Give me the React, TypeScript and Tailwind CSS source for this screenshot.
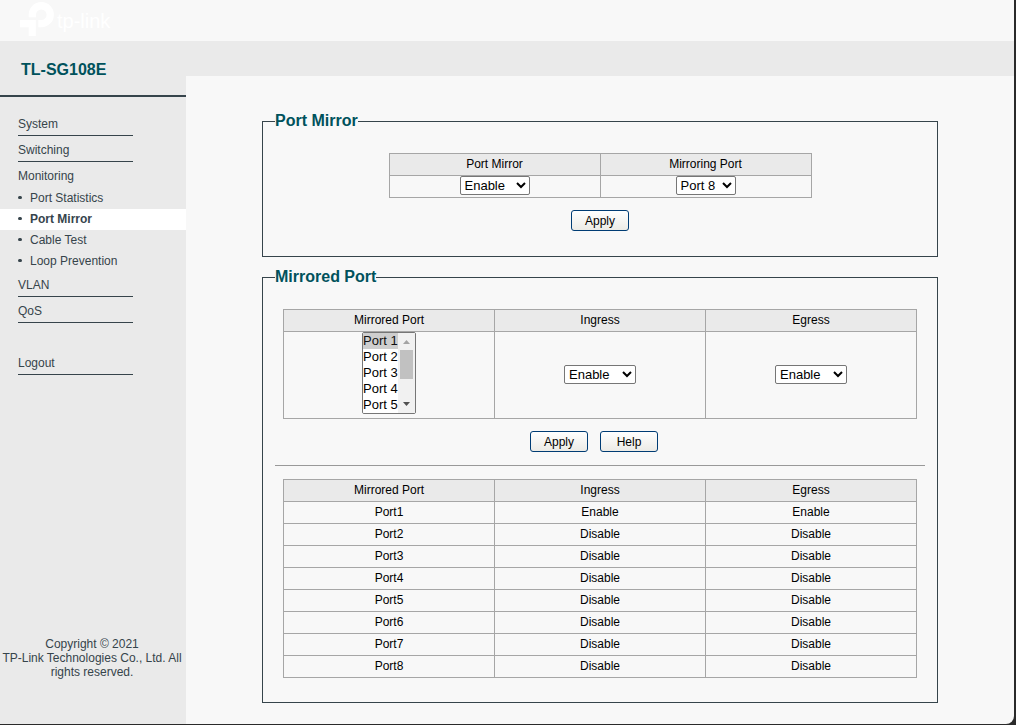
import type { ReactNode } from 'react';

const PORTS = [1, 2, 3, 4, 5, 6, 7, 8];

const SUB_ITEMS = ['Port Statistics', 'Port Mirror', 'Cable Test', 'Loop Prevention'];

function Logo() {
  return (
    <div className="flex h-full items-center gap-[3px] pb-[3px] pl-5 text-white">
      <svg viewBox="0 0 34 34" className="h-[34px] w-[34px]" fill="currentColor" aria-hidden="true">
        <path d="M8.7 15.3V12.7A12.6 12.6 0 1 1 21.3 25.3H18.3V18H21.3A5.3 5.3 0 1 0 16 12.7V15.3Z" />
        <path d="M0 18H15.8V34H8.7V25.2H0Z" />
      </svg>
      <span className="pt-1 text-[20px] leading-6">tp-link</span>
    </div>
  );
}

function MenuLink({ children }: { children: ReactNode }) {
  return (
    <a href="#" className="block h-[26px] border-b border-[#36444b] pt-1 leading-5">
      {children}
    </a>
  );
}

function Sidebar() {
  return (
    <aside className="flex w-[186px] shrink-0 flex-col bg-[#eaeaea] text-[#36444b]">
      <h1 className="border-b-2 border-[#36444b] pt-[19px] pb-[15px] pl-[21px] text-base leading-5 font-bold text-[#00525c]">
        TL-SG108E
      </h1>
      <nav className="pt-[13px]">
        <div className="mr-[53px] ml-[18px]">
          <MenuLink>System</MenuLink>
          <MenuLink>Switching</MenuLink>
          <a href="#" className="block h-[26px] pt-1 leading-5">
            Monitoring
          </a>
        </div>
        <ul className="-mb-px">
          {SUB_ITEMS.map((item) => (
            <li key={item} className={item === 'Port Mirror' ? 'bg-white font-bold' : ''}>
              <a href="#" className="flex h-[21px] items-center gap-2 pb-0.5 pl-[18px]">
                <span className="h-[3px] w-1 rounded-full bg-[#36444b]" />
                {item}
              </a>
            </li>
          ))}
        </ul>
        <div className="mr-[53px] ml-[18px]">
          <MenuLink>VLAN</MenuLink>
          <MenuLink>QoS</MenuLink>
          <div className="pt-[26px]">
            <MenuLink>Logout</MenuLink>
          </div>
        </div>
      </nav>
      <footer className="mt-auto pr-0.5 pb-[45px] text-center leading-[14px]">
        Copyright © 2021
        <br />
        TP-Link Technologies Co., Ltd. All rights reserved.
      </footer>
    </aside>
  );
}

function Section({ title, children }: { title: string; children: ReactNode }) {
  return (
    <fieldset className="min-w-0 border border-[#36444b] px-3 pb-6">
      <legend className="pb-0.5 text-base leading-[17px] font-bold text-[#00525c]">{title}</legend>
      <div className="flex flex-col items-center pt-[22px]">{children}</div>
    </fieldset>
  );
}

function Th({ children }: { children: ReactNode }) {
  return (
    <th className="h-[22px] border border-[#a6a6a6] bg-[#eaeaea] p-0 pb-0.5 font-normal">{children}</th>
  );
}

function Td({ children }: { children: ReactNode }) {
  return <td className="h-[22px] border border-[#a6a6a6] p-0 pb-0.5 text-center">{children}</td>;
}

function Button({ children }: { children: ReactNode }) {
  return (
    <button
      type="button"
      className="h-[21px] w-[58px] rounded-[3px] border border-[#003c74] bg-linear-to-b from-white to-[#ecebe6] leading-4"
    >
      {children}
    </button>
  );
}

function Select({ label, width, options, value }: { label: string; width: string; options: string[]; value: string }) {
  return (
    <select
      aria-label={label}
      defaultValue={value}
      className={`mx-auto block h-[19px] rounded-[2px] border border-[#767676] bg-white text-[13px] ${width}`}
    >
      {options.map((option) => (
        <option key={option}>{option}</option>
      ))}
    </select>
  );
}

function PortList() {
  return (
    <div className="relative mx-auto h-[82px] w-[54px]">
      <select
        multiple
        size={5}
        aria-label="Mirrored Port"
        defaultValue={['Port 1']}
        className="block h-full w-full rounded-[2px] border border-[#767676] bg-white text-[13px] leading-4"
      >
        {PORTS.map((n) => (
          <option key={n} className="h-4 p-0">{`Port ${n}`}</option>
        ))}
      </select>
      <div
        aria-hidden="true"
        className="pointer-events-none absolute inset-y-px right-px flex w-[17px] flex-col items-center bg-[#f1f1f1]"
      >
        <svg viewBox="0 0 17 17" className="h-[17px] w-[17px]" fill="#a3a3a3">
          <path d="M5 11H12L8.5 7Z" />
        </svg>
        <div className="h-[29px] w-[13px] bg-[#c1c1c1]" />
        <svg viewBox="0 0 17 17" className="mt-auto h-[17px] w-[17px]" fill="#505050">
          <path d="M5 6H12L8.5 10Z" />
        </svg>
      </div>
    </div>
  );
}

const STATES = ['Enable', 'Disable'];

export default function App() {
  return (
    <div className="flex min-h-screen flex-col bg-[#2a2a2a] pr-0.5 pb-px font-['Liberation_Sans',Arial,sans-serif] text-xs text-black">
      <div className="flex grow flex-col rounded-br-lg bg-[#f8f8f8]">
        <header className="h-[41px]">
          <Logo />
        </header>
        <div className="flex grow">
          <Sidebar />
          <div className="grow">
            <div className="h-[35px] bg-[#eaeaea]" />
            <main className="mx-auto flex max-w-[676px] flex-col gap-[11px] pt-9 pb-5">
              <Section title="Port Mirror">
                <table className="w-[423px] table-fixed border-collapse">
                  <thead>
                    <tr>
                      <Th>Port Mirror</Th>
                      <Th>Mirroring Port</Th>
                    </tr>
                  </thead>
                  <tbody>
                    <tr>
                      <Td>
                        <Select label="Port Mirror" width="w-[70px]" options={STATES} value="Enable" />
                      </Td>
                      <Td>
                        <Select
                          label="Mirroring Port"
                          width="w-[60px]"
                          options={PORTS.map((n) => `Port ${n}`)}
                          value="Port 8"
                        />
                      </Td>
                    </tr>
                  </tbody>
                </table>
                <div className="flex pt-3 pb-px">
                  <Button>Apply</Button>
                </div>
              </Section>

              <Section title="Mirrored Port">
                <table className="w-[634px] max-w-full table-fixed border-collapse">
                  <thead>
                    <tr>
                      <Th>Mirrored Port</Th>
                      <Th>Ingress</Th>
                      <Th>Egress</Th>
                    </tr>
                  </thead>
                  <tbody>
                    <tr>
                      <td className="h-[87px] border border-[#a6a6a6] p-0 align-top">
                        <PortList />
                      </td>
                      <Td>
                        <Select label="Ingress" width="w-[72px]" options={STATES} value="Enable" />
                      </Td>
                      <Td>
                        <Select label="Egress" width="w-[72px]" options={STATES} value="Enable" />
                      </Td>
                    </tr>
                  </tbody>
                </table>
                <div className="flex gap-3 pt-3 pr-3 pb-px">
                  <Button>Apply</Button>
                  <Button>Help</Button>
                </div>
                <hr className="mt-3 mb-[13px] w-full border-[#999]" />
                <table className="w-[634px] max-w-full table-fixed border-collapse">
                  <thead>
                    <tr>
                      <Th>Mirrored Port</Th>
                      <Th>Ingress</Th>
                      <Th>Egress</Th>
                    </tr>
                  </thead>
                  <tbody>
                    {PORTS.map((n) => (
                      <tr key={n}>
                        <Td>{`Port${n}`}</Td>
                        <Td>{n === 1 ? 'Enable' : 'Disable'}</Td>
                        <Td>{n === 1 ? 'Enable' : 'Disable'}</Td>
                      </tr>
                    ))}
                  </tbody>
                </table>
              </Section>
            </main>
          </div>
        </div>
      </div>
    </div>
  );
}
